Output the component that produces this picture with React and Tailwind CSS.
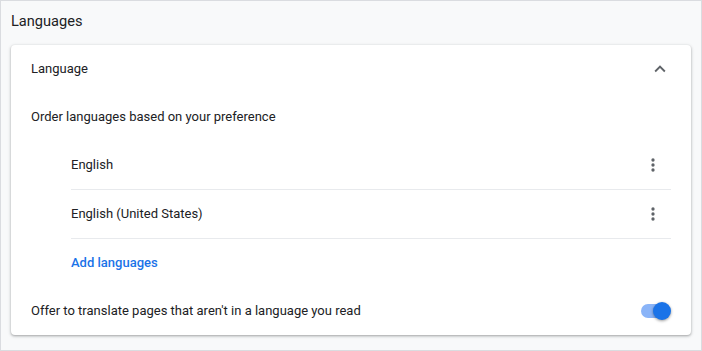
export default function App() {
  const rows = ['English', 'English (United States)'];

  return (
    <div className="w-[702px] h-[351px] bg-[#f8f9fa] border border-[#dadce0] font-['Roboto',sans-serif] text-[#202124] overflow-hidden">
      <div className="h-[40px] flex items-center pl-[10px] pt-[1px] text-[14.6px]">Languages</div>
      <div className="mx-[10px] mt-[4px] bg-white rounded-[4px] shadow-[0_1px_2px_rgba(60,64,67,0.3),0_1px_3px_1px_rgba(60,64,67,0.15)]">
        <div className="h-[48px] flex items-center justify-between pl-[20px] pr-[20px] text-[13px]">
          <span>Language</span>
          <svg width="22" height="22" viewBox="0 0 24 24" className="fill-[#5f6368]">
            <path d="M7.41 15.41 12 10.83l4.59 4.58L18 14l-6-6-6 6z" />
          </svg>
        </div>
        <div className="h-[48px] flex items-center pl-[20px] text-[13px]">Order languages based on your preference</div>
        <div className="pl-[60px] pr-[20px]">
          {rows.map((r) => (
            <div key={r} className="h-[49px] flex items-center justify-between border-b border-[#e8eaed] text-[13px]">
              <span>{r}</span>
              <svg width="20" height="20" viewBox="0 0 24 24" className="fill-[#5f6368] mr-[8px]">
                <circle cx="12" cy="6" r="2" />
                <circle cx="12" cy="12" r="2" />
                <circle cx="12" cy="18" r="2" />
              </svg>
            </div>
          ))}
          <div className="h-[48px] flex items-center text-[13px] font-medium text-[#1a73e8]">Add languages</div>
        </div>
        <div className="h-[48px] flex items-center justify-between pl-[20px] pr-[20px] text-[13px]">
          <span>Offer to translate pages that aren't in a language you read</span>
          <div className="relative w-[30px] h-[20px] flex items-center">
            <div className="w-[28px] h-[14px] rounded-full bg-[#8ab4f8]" />
            <div className="absolute right-0 top-[1px] w-[18px] h-[18px] rounded-full bg-[#1a73e8] shadow-[0_1px_3px_rgba(0,0,0,0.4)]" />
          </div>
        </div>
      </div>
    </div>
  );
}
